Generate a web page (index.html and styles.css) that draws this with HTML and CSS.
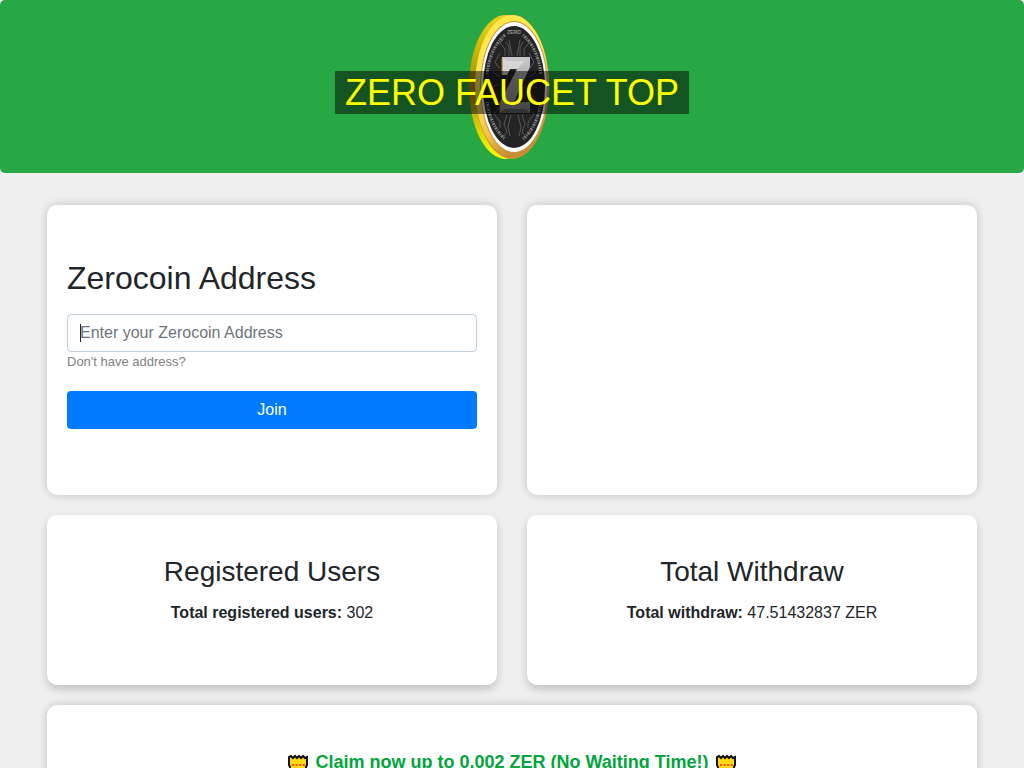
FILE: index.html
```html
<!DOCTYPE html>
<html lang="en">
<head>
<meta charset="utf-8">
<meta name="viewport" content="width=device-width, initial-scale=1">
<title>Zero Faucet Top</title>
<link rel="stylesheet" href="styles.css">
</head>
<body>
<header class="banner">
  <svg class="coin" viewBox="0 0 80 146" width="80" height="146" aria-hidden="true">
    <defs>
      <linearGradient id="side" x1="0" y1="0" x2="0" y2="1">
        <stop offset="0" stop-color="#e6d61c"/><stop offset=".25" stop-color="#c9b400"/><stop offset=".5" stop-color="#b08a08"/><stop offset=".75" stop-color="#d6c600"/><stop offset="1" stop-color="#ffff00"/>
      </linearGradient>
      <linearGradient id="rim" x1="0" y1="0" x2=".4" y2="1">
        <stop offset="0" stop-color="#ffe93a"/><stop offset=".5" stop-color="#ffe560"/><stop offset=".8" stop-color="#f0c24a"/><stop offset="1" stop-color="#c98d35"/>
      </linearGradient>
      <linearGradient id="zed" x1="0" y1="0" x2="0" y2="1">
        <stop offset="0" stop-color="#c8c8c8"/><stop offset=".5" stop-color="#a8a8a8"/><stop offset="1" stop-color="#8c8c8c"/>
      </linearGradient>
    </defs>
    <ellipse cx="37" cy="73" rx="37" ry="72" fill="url(#side)"/>
    <ellipse cx="43" cy="73" rx="37" ry="72" fill="#c98f30"/>
    <ellipse cx="43" cy="72" rx="37" ry="71" fill="url(#rim)"/>
    <ellipse cx="45" cy="73" rx="34" ry="66" fill="#c9963e"/>
    <ellipse cx="45" cy="73" rx="33" ry="65" fill="#fff"/>
    <ellipse cx="45" cy="73" rx="31" ry="61" fill="#242424"/>
    <path d="M18 60Q21 34 36 21M54 21Q69 34 72 60M18 88Q22 113 36 125M54 125Q68 113 72 88" fill="none" stroke="#808080" stroke-width="3" stroke-dasharray="1 1 2 1"/>
    <text class="coin-text" x="45" y="20">ZERO</text>
    <g fill="none" stroke="#585858">
      <path d="M36 42V35l-5-6 4-4M40 42V33l-3-5M43 42l-3-16M48 42l3-16M51 42V33l3-5M55 42V35l5-6-4-4M30 54l-4-6 5-9M61 54l4-6-5-9"/>
      <path d="M38 101l-3 9 3 8-4 5M42 101l-3 12 2 9M49 101l3 12-2 9M53 101l3 9-3 8 4 5M30 94l-5 6 6 8v6M60 94l5 6-6 8v6"/>
      <path d="M31 63l-7-5M30 70l-8 4M28 80l-5 5 4 5M60 63l7-5M60 70l8 4M61 80l6 5-4 5"/>
    </g>
    <path d="M33 43h28v10L45 88h16v11H31V88l17-33h-7l-3 6h-5z" fill="url(#zed)"/>
    <path d="M33 61V43l5 4h18l-8 8h-7l-3 6z" fill="#e4e4e4" opacity=".6"/>
    <path d="M33 44v17M31 88v11" stroke="#a87518"/>
    <path d="M35 95h22l4 4H31z" fill="#666"/>
  </svg>
  <h1 class="banner-title">ZERO FAUCET TOP</h1>
</header>
<main class="grid">
  <section class="card card-form">
    <form>
      <h2 class="form-title"><label for="address">Zerocoin Address</label></h2>
      <div class="field"><input class="input" id="address" type="text" placeholder="Enter your Zerocoin Address"></div>
      <a class="hint" href="#">Don't have address?</a>
      <button class="button" type="submit">Join</button>
    </form>
  </section>
  <section class="card"></section>
  <section class="card card-stat">
    <h3 class="stat-title">Registered Users</h3>
    <p class="stat-text"><b>Total registered users:</b> 302</p>
  </section>
  <section class="card card-stat">
    <h3 class="stat-title">Total Withdraw</h3>
    <p class="stat-text"><b>Total withdraw:</b> 47.51432837 ZER</p>
  </section>
  <section class="card card-claim">
    <p class="claim">
      <svg class="sprite" viewBox="0 0 20 20" width="20" height="20" aria-hidden="true"><path d="M2 20V7L1 4l2-1 2 2 2-2 2 2 2-2 2 2 2-2 2 2 2-2 1 1-1 3v13z" fill="#ffd90f"/><path d="M2 20V14L1 12V4l2-1 2 2 2-2 2 2 2-2 2 2 2-2 2 2 2-1v8l-1 2v6" fill="none" stroke="#111" stroke-width="2"/><path d="M4 12h13" stroke="#ff4b00" stroke-width="2" stroke-dasharray="2 1.600"/></svg>
      <span>Claim now up to 0.002 ZER (No Waiting Time!)</span>
      <svg class="sprite" viewBox="0 0 20 20" width="20" height="20" aria-hidden="true"><path d="M2 20V7L1 4l2-1 2 2 2-2 2 2 2-2 2 2 2-2 2 2 2-2 1 1-1 3v13z" fill="#ffd90f"/><path d="M2 20V14L1 12V4l2-1 2 2 2-2 2 2 2-2 2 2 2-2 2 2 2-1v8l-1 2v6" fill="none" stroke="#111" stroke-width="2"/><path d="M4 12h13" stroke="#ff4b00" stroke-width="2" stroke-dasharray="2 1.600"/></svg>
    </p>
  </section>
</main>
</body>
</html>
```
FILE: styles.css
```css
* { box-sizing: border-box; }
html { scrollbar-width: none; }
body {
  margin: 0;
  background: #efefef;
  color: #212529;
  font: 16px/24px "Liberation Sans", Arial, sans-serif;
}
h1, h2, h3, p { margin: 0; font-weight: 400; }
.banner {
  display: grid;
  place-items: center;
  padding: 14px 0 13px;
  border-radius: 5px;
  background: #28a745;
}
.coin, .banner-title { grid-area: 1 / 1; }
.coin { display: block; margin-right: 6px; }
.coin-text {
  fill: #999;
  font-size: 5px;
  font-weight: 700;
  text-anchor: middle;
}
.banner-title {
  z-index: 1;
  margin-top: 10px;
  padding: 0 10px;
  background: rgba(0, 0, 0, .5);
  color: #ff0;
  font-size: 36px;
  line-height: 43px;
}
.grid {
  display: grid;
  grid-template-columns: 1fr 1fr;
  gap: 20px 30px;
  max-width: 1110px;
  margin: 32px auto;
  padding: 0 47px;
}
.card {
  padding: 20px;
  border-radius: 10px;
  background: #fff;
  box-shadow: 0 0 10px rgba(0, 0, 0, .2);
}
.card-form { padding: 53px 20px 66px; }
.form-title { margin-bottom: 16px; font-size: 32px; line-height: 40px; }
.field { position: relative; }
.field::before {
  content: "";
  position: absolute;
  top: 10px;
  left: 13px;
  width: 1px;
  height: 18px;
  background: #212529;
}
.input {
  display: block;
  width: 100%;
  height: 38px;
  padding: 6px 12px;
  border: 1px solid #c3d0e0;
  border-radius: 4px;
  color: inherit;
  font: inherit;
}
.input::placeholder { color: #6c757d; opacity: 1; }
.hint {
  display: block;
  color: #808080;
  font-size: 13px;
  line-height: 20px;
  text-decoration: none;
}
.button {
  width: 100%;
  height: 38px;
  margin-top: 19px;
  border: 0;
  border-radius: 4px;
  background: #007bff;
  color: #fff;
  font: inherit;
}
.card-stat {
  padding: 40px 20px 60px;
  box-shadow: 0 4px 8px rgba(0, 0, 0, .2);
  text-align: center;
}
.stat-title { margin-bottom: 12px; font-size: 28px; line-height: 34px; }
.card-claim { grid-column: 1 / -1; padding: 44px 20px; }
.claim {
  display: flex;
  justify-content: center;
  align-items: center;
  gap: 7px;
  color: #00a53c;
  font-size: 18px;
  font-weight: 700;
  line-height: 27px;
}
```
